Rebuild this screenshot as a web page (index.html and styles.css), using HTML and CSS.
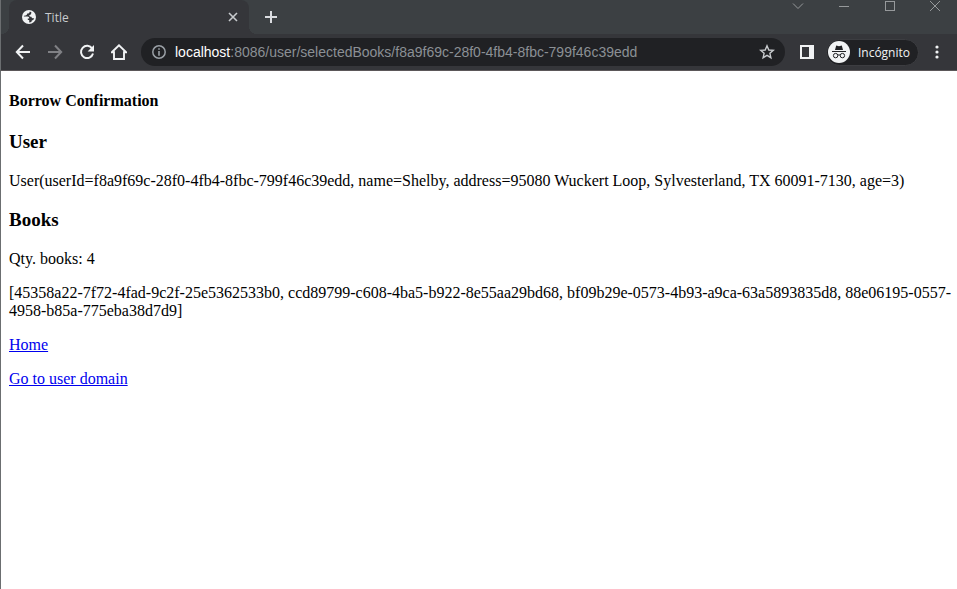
FILE: index.html
```html
<!DOCTYPE html>
<html lang="en">
<head>
  <meta charset="UTF-8" />
  <meta name="viewport" content="width=device-width, initial-scale=1.0" />
  <title>Title</title>
  <link rel="stylesheet" href="styles.css">
</head>
<body>
  <header class="browser">
    <div class="tab-strip">
      <div class="tab">
        <svg class="favicon" width="14" height="14" viewBox="0 0 14 14">
          <circle cx="7" cy="7" r="7" fill="#f1f3f4" />
          <path d="M7.8 1.6 C7.6 3.4 6.4 3.6 5.2 3.6 C5 5 4.4 5.6 2.6 5.6 L1.6 6.6 H5.4 C7 6.6 7.2 7.6 7.2 8.4 H5.8 V10 H7.2 V12.4 C9.4 12.4 9.6 11.6 9.8 10.4 C11 10.4 11.8 9.6 12.2 8.2 C10.6 8.6 9.6 8 9.4 6.8 C8.2 6.8 7.2 6.2 7.2 5.2 C8.4 5.2 9.2 4.4 9.4 2.2 Z" fill="#35363a" />
        </svg>
        <span class="tab-title">Title</span>
        <button class="icon-button tab-close" aria-label="Close tab">
          <svg width="16" height="16" viewBox="0 0 16 16"><path d="M4 4 L12 12 M12 4 L4 12" stroke="#c8cbce" stroke-width="1.6" /></svg>
        </button>
      </div>
      <button class="icon-button new-tab" aria-label="New tab">
        <svg width="16" height="16" viewBox="0 0 16 16"><path d="M8 2 V14 M2 8 H14" stroke="#dadce0" stroke-width="2" /></svg>
      </button>
      <div class="window-controls">
        <button class="icon-button" aria-label="Search tabs">
          <svg width="12" height="12" viewBox="0 0 12 12"><path d="M1 3.5 L6 8.5 L11 3.5" /></svg>
        </button>
        <button class="icon-button" aria-label="Minimize">
          <svg width="12" height="12" viewBox="0 0 12 12"><path d="M1 6.5 H11" /></svg>
        </button>
        <button class="icon-button" aria-label="Maximize">
          <svg width="12" height="12" viewBox="0 0 12 12"><rect x="1.5" y="1.5" width="9" height="9" /></svg>
        </button>
        <button class="icon-button" aria-label="Close">
          <svg width="12" height="12" viewBox="0 0 12 12"><path d="M1 1 L11 11 M11 1 L1 11" /></svg>
        </button>
      </div>
    </div>

    <div class="toolbar">
      <nav class="nav-buttons">
        <button class="icon-button" aria-label="Back">
          <svg width="16" height="16" viewBox="0 0 16 16"><path d="M15 8 H2 M8 1.5 L1.8 8 L8 14.5" fill="none" stroke="#f1f3f4" stroke-width="2" /></svg>
        </button>
        <button class="icon-button" aria-label="Forward" disabled>
          <svg width="16" height="16" viewBox="0 0 16 16"><path d="M1 8 H14 M8 1.5 L14.2 8 L8 14.5" fill="none" stroke="#808185" stroke-width="2" /></svg>
        </button>
        <button class="icon-button" aria-label="Reload">
          <svg width="16" height="16" viewBox="0 0 16 16">
            <path d="M13.2 4.6 A6.1 6.1 0 1 0 14 9.5" fill="none" stroke="#f1f3f4" stroke-width="2" />
            <path d="M15 1 V7.4 H8.6 Z" fill="#f1f3f4" />
          </svg>
        </button>
        <button class="icon-button" aria-label="Home">
          <svg width="16" height="16" viewBox="0 0 16 16"><path d="M0.8 8.3 L8 1.3 L15.2 8.3 H13 V15 H3 V8.3 Z" fill="none" stroke="#f1f3f4" stroke-width="1.9" /></svg>
        </button>
      </nav>

      <div class="address-bar">
        <svg width="14" height="14" viewBox="0 0 14 14">
          <circle cx="7" cy="7" r="6.2" fill="none" stroke="#9aa0a6" stroke-width="1.5" />
          <path d="M7 3.2 V4.8 M7 6 V10.8" stroke="#9aa0a6" stroke-width="1.6" />
        </svg>
        <div class="url">
          <label for="url">localhost</label>
          <input id="url" type="text" value=":8086/user/selectedBooks/f8a9f69c-28f0-4fb4-8fbc-799f46c39edd" spellcheck="false" />
        </div>
        <button class="icon-button" aria-label="Bookmark this page">
          <svg width="16" height="16" viewBox="0 0 16 16"><path d="M8 1.8 L9.8 6 L14.3 6.3 L10.9 9.3 L11.9 13.7 L8 11.4 L4.1 13.7 L5.1 9.3 L1.7 6.3 L6.2 6 Z" fill="none" stroke="#c8cbce" stroke-width="1.4" /></svg>
        </button>
      </div>

      <button class="icon-button" aria-label="Side panel">
        <svg width="14" height="14" viewBox="0 0 14 14"><path d="M0 0 H14 V14 H0 Z M2 2 V12 H9 V2 Z" fill="#f1f3f4" fill-rule="evenodd" /></svg>
      </button>
      <button class="profile">
        <svg width="22" height="22" viewBox="0 0 22 22">
          <circle cx="11" cy="11" r="11" fill="#f1f3f4" />
          <path d="M7 9 L8.2 4.6 L11 5.2 L13.8 4.6 L15 9 Z M4 10 H18 V11 H4 Z" fill="#202124" />
          <g fill="none" stroke="#202124">
            <circle cx="7.6" cy="14.6" r="2.2" />
            <circle cx="14.4" cy="14.6" r="2.2" />
            <path d="M9.8 14.2 Q11 13.4 12.2 14.2" />
          </g>
        </svg>
        <span>Incógnito</span>
      </button>
      <button class="icon-button menu" aria-label="Menu">
        <svg width="4" height="14" viewBox="0 0 4 14" fill="#f1f3f4"><circle cx="2" cy="2" r="1.6" /><circle cx="2" cy="7" r="1.6" /><circle cx="2" cy="12" r="1.6" /></svg>
      </button>
    </div>
  </header>

  <main class="page">
    <h4>Borrow Confirmation</h4>
    <h3>User</h3>
    <p>User(userId=f8a9f69c-28f0-4fb4-8fbc-799f46c39edd, name=Shelby, address=95080 Wuckert Loop, Sylvesterland, TX 60091-7130, age=3)</p>
    <h3>Books</h3>
    <p>Qty. books: 4</p>
    <p>[45358a22-7f72-4fad-9c2f-25e5362533b0, ccd89799-c608-4ba5-b922-8e55aa29bd68, bf09b29e-0573-4b93-a9ca-63a5893835d8, 88e06195-0557-4958-b85a-775eba38d7d9]</p>
    <p><a href="#home">Home</a></p>
    <p><a href="#user">Go to user domain</a></p>
  </main>
</body>
</html>
```
FILE: styles.css
```css
:root {
  --strip: #3c4043;
  --toolbar: #35363a;
  --field: #202124;
  --light: #f1f3f4;
}

* {
  box-sizing: border-box;
}

body {
  margin: 0;
  min-height: 100vh;
  display: flex;
  flex-direction: column;
  background: #fff;
}

.browser {
  font-family: "Open Sans", "Noto Sans", sans-serif;
  background: var(--toolbar);
  border-bottom: 1px solid #5b5759;
  border-left: 1px solid #6b6e70;
}

.icon-button {
  display: flex;
  align-items: center;
  justify-content: center;
  padding: 0;
  border: none;
  background: none;
  cursor: pointer;
}

/* tabs */
.tab-strip {
  display: flex;
  align-items: flex-start;
  height: 34px;
  padding-left: 8px;
  background: var(--strip);
}

.tab {
  position: relative;
  display: flex;
  align-items: center;
  width: 240px;
  height: 34px;
  padding: 0 8px 0 13px;
  background: var(--toolbar);
  border-radius: 8px 8px 0 0;
}
.tab::before,
.tab::after {
  content: "";
  position: absolute;
  bottom: 0;
  width: 8px;
  height: 8px;
}
.tab::before {
  right: 100%;
  background: radial-gradient(circle at 0 0, var(--strip) 8px, var(--toolbar) 8px);
}
.tab::after {
  left: 100%;
  background: radial-gradient(circle at 100% 0, var(--strip) 8px, var(--toolbar) 8px);
}

.tab-title {
  flex: 1;
  margin-left: 9px;
  font-size: 12px;
  color: #c8cbce;
}

.new-tab {
  width: 28px;
  height: 34px;
  margin-left: 8px;
}

.window-controls {
  display: flex;
  margin-left: auto;
}
.window-controls .icon-button {
  width: 46px;
  height: 12px;
}
.window-controls .icon-button:last-child {
  width: 44px;
}
.window-controls svg {
  fill: none;
  stroke: #96999b;
}

/* toolbar */
.toolbar {
  display: flex;
  align-items: center;
  height: 36px;
  padding: 0 8px 0 14px;
}

.nav-buttons {
  display: flex;
  gap: 16px;
}

.address-bar {
  display: flex;
  flex: 1;
  align-items: center;
  height: 28px;
  margin: 0 15px 0 14px;
  padding: 0 10px 0 11px;
  background: var(--field);
  border-radius: 14px;
}

.url {
  display: flex;
  flex: 1;
  align-items: center;
  margin: 0 8px 0 9px;
  font-family: "Liberation Sans", Arial, sans-serif;
  font-size: 14px;
  line-height: 20px;
}
.url label {
  color: #fff;
}
.url input {
  flex: 1;
  min-width: 0;
  padding: 0;
  border: none;
  outline: none;
  background: none;
  font: inherit;
  color: #8b9095;
}

.profile {
  display: flex;
  align-items: center;
  gap: 8px;
  height: 27px;
  margin: 0 6px 0 12px;
  padding: 0 8px 0 1px;
  border: 1px solid #3c3d41;
  border-radius: 14px;
  background: var(--field);
  font-family: inherit;
  font-size: 12px;
  color: var(--light);
}

.menu {
  width: 24px;
  height: 24px;
}

/* page content */
.page {
  flex: 1;
  padding: 0 0 0 8px;
  border-left: 1px solid #6b6e70;
  font-family: "Liberation Serif", "Times New Roman", serif;
  font-size: 16px;
  line-height: 18px;
  color: #000;
}
.page h4 {
  margin: 21px 0;
  font-size: 16px;
}
.page h3 {
  margin: 19px 0;
  font-size: 19px;
  line-height: 22px;
}
.page p {
  margin: 16px 0;
}
.page a {
  color: #0000ee;
}
```
